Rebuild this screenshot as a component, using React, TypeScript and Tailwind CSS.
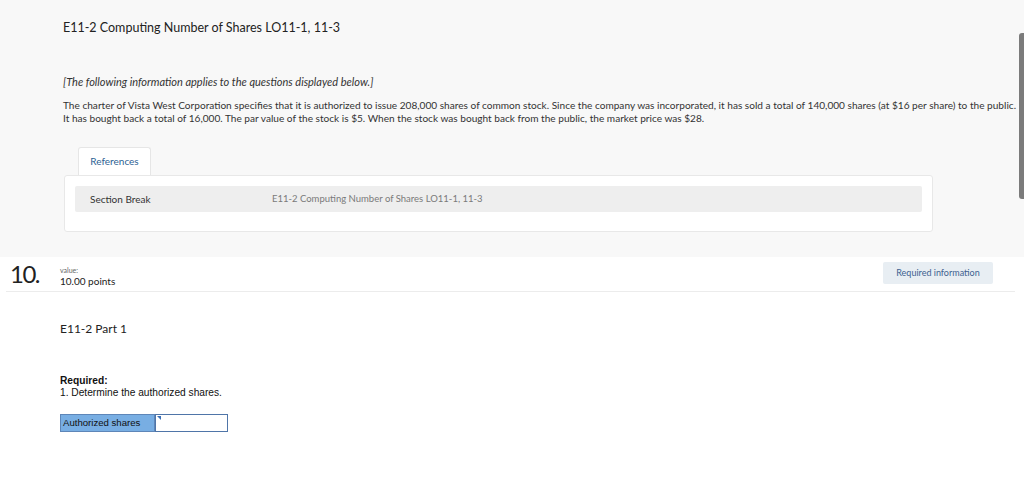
import React from "react";

const proxima = { fontFamily: "Lato, 'Open Sans', sans-serif" };

const App = () => {
  return (
    <div className="w-[1024px] h-[489px] overflow-hidden bg-white text-[#222]" style={proxima}>
      <div className="relative h-[257px] bg-[#f8f8f8] overflow-hidden">
        <div className="pl-[63px] pt-[19px]">
          <h1 className="text-[12.5px] leading-[18px] text-[#222]">E11-2 Computing Number of Shares LO11-1, 11-3</h1>
          <p className="mt-[38px] text-[11px] italic leading-[13px] text-[#333]">
            [The following information applies to the questions displayed below.]
          </p>
          <div className="mt-[11px] text-[10.1px] leading-[13px] text-[#333] whitespace-nowrap">
            <div>
              The charter of Vista West Corporation specifies that it is authorized to issue 208,000 shares of common stock. Since the company was incorporated, it has sold a total of 140,000 shares (at $16 per share) to the public.
            </div>
            <div>
              It has bought back a total of 16,000. The par value of the stock is $5. When the stock was bought back from the public, the market price was $28.
            </div>
          </div>
        </div>

        <div className="ml-[64px] mt-[22px] w-[869px]">
          <div className="ml-[14px] flex h-[28px] w-[73px] items-center justify-center rounded-t-[3px] border border-b-0 border-[#e6e6e6] bg-white text-[10px] text-[#2d5f93]">
            References
          </div>
          <div className="h-[57px] rounded-[3px] border border-[#e8e8e8] bg-white px-[10px] pt-[10px]">
            <div className="flex h-[26px] items-center rounded-[2px] bg-[#eeeeee] text-[10px]">
              <span className="w-[197px] pl-[15px] text-[#333]">Section Break</span>
              <span className="text-[9.5px] text-[#7a7a7a]">E11-2 Computing Number of Shares LO11-1, 11-3</span>
            </div>
          </div>
        </div>

        <div className="absolute right-0 top-[33px] h-[166px] w-[5px] rounded-l-[3px] bg-[#7b7b7b]" />
      </div>

      <div className="mx-[6px] w-[1009px] border-b border-[#ececec]">
        <div className="flex h-[34px] items-start">
          <div className="w-[54px] pl-[4px] pt-[3px] text-[24px] leading-[28px] tracking-[-1.5px] text-[#222]">10.</div>
          <div className="flex-1 pt-[9px]">
            <div className="text-[7px] leading-[8px] text-[#666]">value:</div>
            <div className="mt-[1px] text-[10px] leading-[13px] text-[#222]">10.00 points</div>
          </div>
          <div className="mr-[22px] mt-[5px] flex h-[22px] w-[110px] items-center justify-center rounded-[2px] bg-[#e8eef3] text-[9px] text-[#3d6290]">
            Required information
          </div>
        </div>
      </div>

      <div className="pl-[60px]">
        <h2 className="mt-[29px] text-[12px] leading-[16px] text-[#222]">E11-2 Part 1</h2>
        <div className="mt-[38px] text-[10.2px] leading-[12px] text-[#111]" style={{ fontFamily: "'Liberation Sans', Arial, sans-serif" }}>
          <div className="font-bold">Required:</div>
          <div>1. Determine the authorized shares.</div>
          <div className="mt-[15px] flex h-[18px] w-[168px]">
            <div className="flex w-[95px] items-center border border-[#5e86b8] bg-[#78aee3] pl-[2px] text-[9.6px] text-[#111]">
              Authorized shares
            </div>
            <div className="relative flex-1 border border-[#4f75a8] bg-white">
              <div className="absolute left-[1px] top-[1px] h-0 w-0 border-l-[4px] border-t-[4px] border-l-[#3b6fb5] border-t-transparent rotate-180" />
            </div>
          </div>
        </div>
      </div>
    </div>
  );
};

export default App;
